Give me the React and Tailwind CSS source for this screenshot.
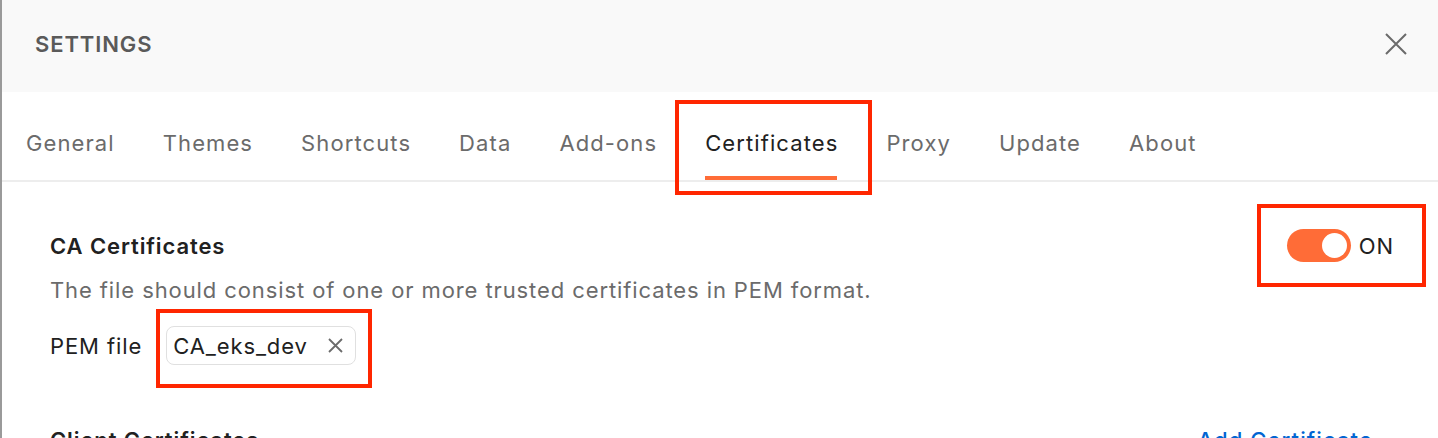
import React from "react";

const tabs = ["General", "Themes", "Shortcuts", "Data", "Add-ons", "Certificates", "Proxy", "Update", "About"];

export default function App() {
  return (
    <div
      className="relative h-[438px] w-[1438px] overflow-hidden bg-white border-l-2 border-[#9a9a9a] text-[#212121] tracking-[0.9px]"
      style={{ fontFamily: "Inter, 'Noto Sans', sans-serif" }}
    >
      {/* Header */}
      <div className="h-[92px] bg-[#f9f9f9] flex items-center justify-between pl-[33px] pr-[31px] pb-[4px]">
        <div className="text-[22px] leading-[28px] font-semibold text-[#5a5a5a]">SETTINGS</div>
        <svg width="22" height="22" viewBox="0 0 22 22" className="text-[#6b6b6b]">
          <path d="M1 1 L21 21 M21 1 L1 21" stroke="currentColor" strokeWidth="2" fill="none" />
        </svg>
      </div>

      {/* Tabs */}
      <div className="flex h-[90px] border-b-2 border-[#ededed] pl-[24px] gap-[48px] tracking-[1.1px]">
        {tabs.map((t) => {
          const active = t === "Certificates";
          return (
            <div key={t} className="relative h-[88px] pt-[37px]">
              <div className={`text-[22px] leading-[28px] ${active ? "text-[#212121]" : "text-[#6b6b6b]"}`}>{t}</div>
              {active && (
                <>
                  <div className="absolute left-0 right-[1px] bottom-0 h-[4px] bg-[#ff6c37]" />
                  <div className="absolute left-[-30px] right-[-34px] top-[8px] bottom-[-15px] border-4 border-[#ff2600]" />
                </>
              )}
            </div>
          );
        })}
      </div>

      {/* Content */}
      <div className="pl-[48px] pr-[44px] pt-[47px]">
        <div className="flex items-center justify-between">
          <div className="text-[22px] leading-[28px] font-semibold text-[#212121]">CA Certificates</div>
          <div className="relative flex items-center gap-[8px]">
            <div className="w-[64px] h-[33px] rounded-full bg-[#ff6c37] flex items-center justify-end pr-[4px]">
              <div className="w-[25px] h-[25px] rounded-full bg-white" />
            </div>
            <span className="text-[22px] leading-[28px] text-[#212121]">ON</span>
            <div className="absolute left-[-30px] right-[-32px] top-[-25px] bottom-[-25px] border-4 border-[#ff2600]" />
          </div>
        </div>
        <div className="mt-[14px] text-[22px] leading-[28px] text-[#6b6b6b]">
          The file should consist of one or more trusted certificates in PEM format.
        </div>
        <div className="mt-[22px] flex items-center gap-[24px]">
          <span className="text-[22px] leading-[28px] text-[#212121]">PEM file</span>
          <div className="relative">
            <div className="h-[39px] flex items-center gap-[20px] pl-[6px] pr-[12px] border-[1.5px] border-[#e0e0e0] rounded-[8px]">
              <span className="text-[22px] leading-[28px] text-[#212121]">CA_eks_dev</span>
              <svg width="15" height="15" viewBox="0 0 15 15" className="text-[#6b6b6b]">
                <path d="M1 1 L14 14 M14 1 L1 14" stroke="currentColor" strokeWidth="1.8" fill="none" />
              </svg>
            </div>
            <div className="absolute left-[-10px] right-[-16px] top-[-17px] bottom-[-23px] border-4 border-[#ff2600]" />
          </div>
        </div>
        <div className="mt-[61px] flex items-center justify-between pr-[21px]">
          <div className="text-[22px] leading-[28px] font-semibold text-[#212121]">Client Certificates</div>
          <div className="text-[22px] leading-[28px] font-medium text-[#0265d2] tracking-[1.1px]">Add Certificate</div>
        </div>
      </div>
    </div>
  );
}
